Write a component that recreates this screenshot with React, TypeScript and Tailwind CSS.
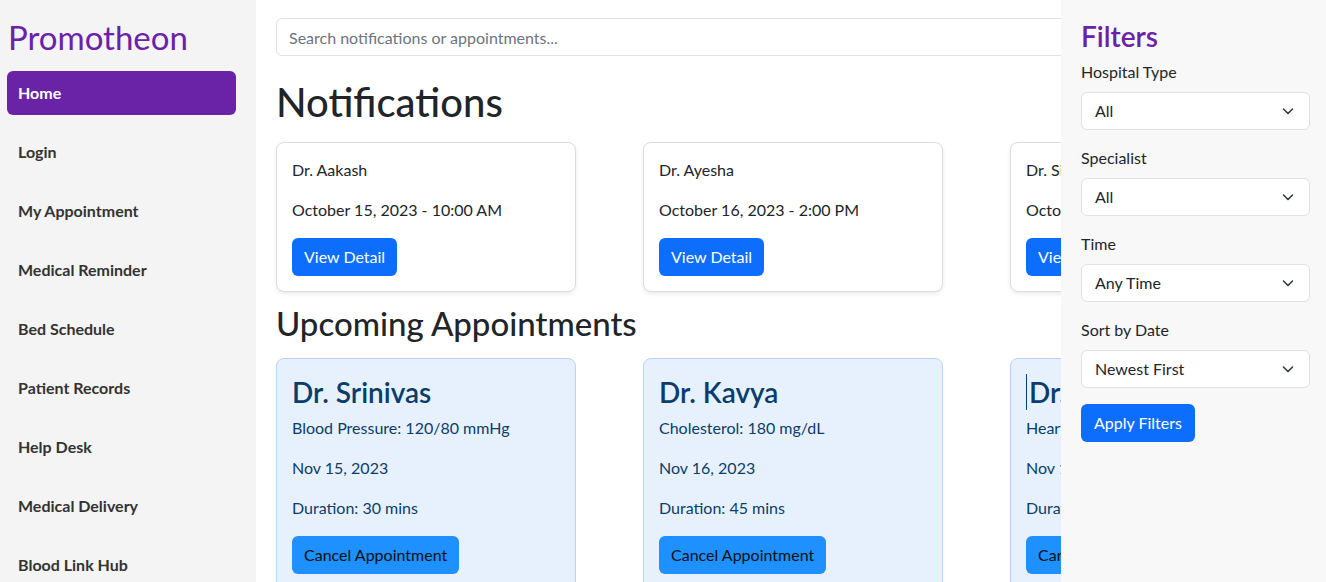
import { useState } from "react";

const navItems = [
  "Home",
  "Login",
  "My Appointment",
  "Medical Reminder",
  "Bed Schedule",
  "Patient Records",
  "Help Desk",
  "Medical Delivery",
  "Blood Link Hub",
];

const notifications = [
  { doctor: "Dr. Aakash", when: "October 15, 2023 - 10:00 AM" },
  { doctor: "Dr. Ayesha", when: "October 16, 2023 - 2:00 PM" },
  { doctor: "Dr. Siddharth", when: "October 17, 2023 - 11:30 AM" },
];

const appointments = [
  { doctor: "Dr. Srinivas", reading: "Blood Pressure: 120/80 mmHg", date: "Nov 15, 2023", duration: "Duration: 30 mins" },
  { doctor: "Dr. Kavya", reading: "Cholesterol: 180 mg/dL", date: "Nov 16, 2023", duration: "Duration: 45 mins" },
  { doctor: "Dr. Rohan", reading: "Heart Rate: 72 bpm", date: "Nov 17, 2023", duration: "Duration: 20 mins", caret: true },
];

const filters = [
  { label: "Hospital Type", value: "All" },
  { label: "Specialist", value: "All" },
  { label: "Time", value: "Any Time" },
  { label: "Sort by Date", value: "Newest First" },
];

function Chevron() {
  return (
    <svg width="12" height="12" viewBox="0 0 12 12" className="pointer-events-none absolute right-[15px] top-1/2 -translate-y-1/2">
      <path d="m1.5 4 4.5 4.5 4.5-4.5" fill="none" stroke="#343a40" strokeWidth="1.6" strokeLinecap="round" strokeLinejoin="round" />
    </svg>
  );
}

function Sidebar() {
  const [active, setActive] = useState("Home");

  return (
    <aside className="flex h-full w-[256px] shrink-0 flex-col bg-[#f4f4f4] pl-[7px] pr-[20px]">
      <h1 className="mt-[17px] pl-[1px] text-[33px] leading-[40px] font-normal text-[#6b21a8]">Promotheon</h1>
      <nav className="mt-[14px] flex flex-col gap-[15px]">
        {navItems.map((item) => (
          <button
            key={item}
            type="button"
            onClick={() => setActive(item)}
            className={`flex h-[44px] items-center rounded-md px-[11px] text-left text-[16px] font-bold ${
              active === item ? "bg-[#6a23a6] text-white" : "text-[#333333]"
            }`}
          >
            {item}
          </button>
        ))}
      </nav>
    </aside>
  );
}

function FilterPanel() {
  return (
    <aside className="fixed right-0 top-0 h-screen w-[265px] bg-[#f8f8f8] pl-5 pr-4 pt-[19px]">
      <h2 className="text-[28px] leading-[34px] font-semibold text-[#6b21a8]">Filters</h2>
      <div className="mt-[7px] flex flex-col gap-[16px]">
        {filters.map((f) => (
          <div key={f.label} className="flex flex-col gap-[8px]">
            <span className="text-[16px] leading-[24px] text-[#212529]">{f.label}</span>
            <div className="relative flex h-[38px] items-center rounded-md border border-[#dee2e6] bg-white pl-[13px] text-[16px] text-[#212529]">
              {f.value}
              <Chevron />
            </div>
          </div>
        ))}
        <div>
          <button type="button" className="h-[38px] rounded-md bg-[#0d6efd] px-[13px] text-[16px] text-white">
            Apply Filters
          </button>
        </div>
      </div>
    </aside>
  );
}

export default function App() {
  return (
    <div className="flex h-screen overflow-hidden bg-white font-['Lato','Noto_Sans',sans-serif] text-[#212529]">
      <Sidebar />

      <main className="min-w-0 flex-1 bg-white px-5 pt-[18px]">
        <input
          type="text"
          placeholder="Search notifications or appointments..."
          className="h-[38px] w-full rounded-md border border-[#dee2e6] px-3 text-[16px] text-[#212529] outline-none placeholder:text-[#6c757d]"
        />

        <h1 className="mt-[22px] mb-[16px] text-[40px] leading-[48px] font-medium">Notifications</h1>
        <div className="flex gap-[67px]">
          {notifications.map((n) => (
            <div
              key={n.doctor}
              className="w-[300px] shrink-0 rounded-lg border border-[#dcdcdc] bg-white p-[15px] shadow-[0_2px_4px_rgba(0,0,0,0.08)]"
            >
              <p className="text-[16px] leading-[24px]">{n.doctor}</p>
              <p className="mt-4 text-[16px] leading-[24px]">{n.when}</p>
              <button type="button" className="mt-4 h-[38px] rounded-md bg-[#0d6efd] px-[12px] text-[16px] text-white">
                View Detail
              </button>
            </div>
          ))}
        </div>

        <h2 className="mt-[12px] mb-[16px] text-[33px] leading-[38px] font-medium">Upcoming Appointments</h2>
        <div className="flex gap-[67px]">
          {appointments.map((a) => (
            <div
              key={a.doctor}
              className="w-[300px] shrink-0 rounded-lg border border-[#b6d4fe] bg-[#e7f1fe] px-[15px] pt-[16px] pb-[16px] text-[#0a3d6b]"
            >
              <h3 className="flex h-[34px] items-center text-[28px] leading-[34px] font-semibold">
                {a.caret && <span className="-my-[1px] mr-[2px] inline-block h-[36px] w-px shrink-0 bg-[#0a3d6b]" />}
                {a.doctor}
              </h3>
              <p className="mt-[7px] text-[16px] leading-[24px]">{a.reading}</p>
              <p className="mt-4 text-[16px] leading-[24px]">{a.date}</p>
              <p className="mt-4 text-[16px] leading-[24px]">{a.duration}</p>
              <button type="button" className="mt-4 h-[38px] rounded-md bg-[#1e90ff] px-[12px] text-[16px] text-[#111111]">
                Cancel Appointment
              </button>
            </div>
          ))}
        </div>
      </main>

      <FilterPanel />
    </div>
  );
}
